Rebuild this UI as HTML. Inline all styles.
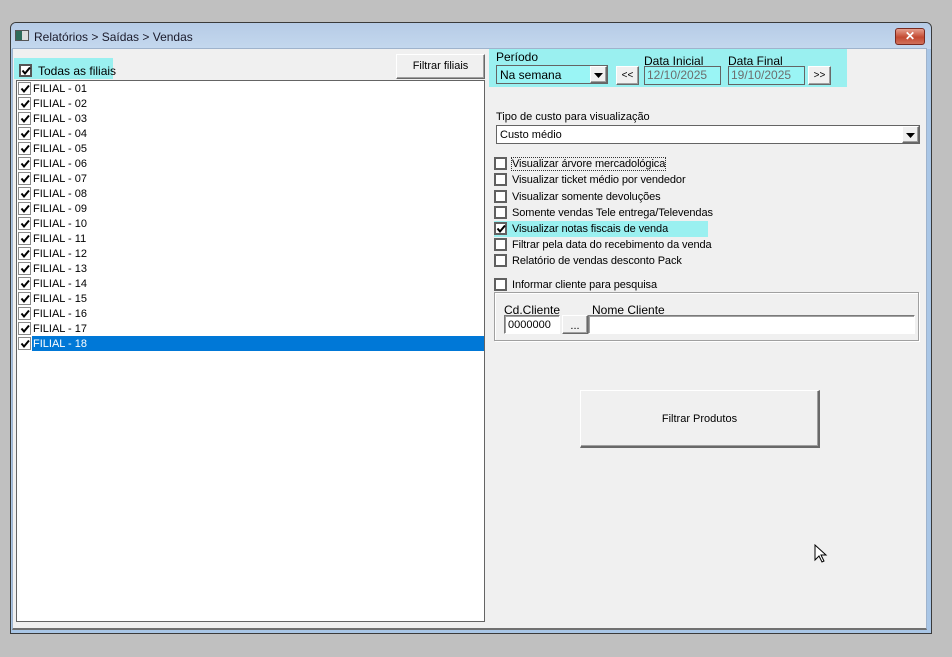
<!DOCTYPE html>
<html><head><meta charset="utf-8"><style>
*{box-sizing:border-box;margin:0;padding:0}
body{width:952px;height:657px;background:#c0c0c0;position:relative;overflow:hidden;font-family:"Liberation Sans",sans-serif;font-size:11px;color:#000}
.a{position:absolute}
.win{left:10px;top:22px;width:922px;height:612px;background:#a9c6e6;border:1px solid #3a3a3a;border-radius:6px 6px 0 0}
.title{left:11px;top:23px;width:920px;height:26px;background:linear-gradient(#b6cbe6,#c4d8ee);border-radius:5px 5px 0 0}
.client{left:12px;top:48px;width:915px;height:582px;background:#f0f0f0;border:1px solid #9fb3cc;border-bottom:2px solid #707070}
.cb{width:13px;height:13px;border:1px solid #555;background:#fff}
.cb.g{border:1px solid #8a8a8a}
.cb svg{position:absolute;left:1px;top:1px}
.btn{background:#f0f0f0;border:1px solid;border-color:#fff #696969 #696969 #fff;box-shadow:inset -1px -1px 0 #a0a0a0;text-align:center}
.inp{background:#fff;border:1px solid;border-color:#7a7a7a #fff #fff #7a7a7a;box-shadow:inset 1px 1px 0 #a0a0a0}
.row{left:18px;height:15px;width:466px}
.row span{position:absolute;left:15px;top:2px}
</style></head><body>
<div class="a win"></div>
<div class="a title"></div>
<div class="a" style="left:15px;top:30px;width:14px;height:11px;border:1px solid #555;background:linear-gradient(90deg,#2f6b5a 50%,#ddd 50%)"></div>
<div class="a" style="left:34px;top:30px;font-size:12px;color:#1a1a2a">Relatórios &gt; Saídas &gt; Vendas</div>
<div class="a" style="left:895px;top:28px;width:30px;height:17px;border:1px solid #7a2a20;border-radius:3px;background:linear-gradient(#e6a08f,#c44a32 55%,#d0705a);color:#fff;font-weight:bold;font-size:12px;text-align:center;line-height:15px">✕</div>
<div class="a client"></div>

<!-- left -->
<div class="a" style="left:14px;top:58px;width:99px;height:21px;background:#9af0f0"></div>
<div class="a cb" style="left:19px;top:64px;border:2px solid #555"><svg width="10" height="10" style="left:0;top:0"><path d="M1.5 4.5l2.5 3 5-6" stroke="#000" stroke-width="2" fill="none"/></svg></div>
<div class="a" style="left:38px;top:64px;font-size:12px">Todas as filiais</div>
<div class="a btn" style="left:396px;top:54px;width:89px;height:25px;line-height:23px">Filtrar filiais</div>
<div class="a" style="left:16px;top:80px;width:469px;height:542px;background:#fff;border:1px solid #646464"></div>
<div class="a" style="left:32px;top:336px;width:452px;height:15px;background:#0078d7"></div>

<div id="rows"></div>

<!-- right -->
<div class="a" style="left:489px;top:49px;width:358px;height:38px;background:#9af0f0"></div>
<div class="a" style="left:496px;top:50px;font-size:12px">Período</div>
<div class="a" style="left:496px;top:65px;width:112px;height:19px;border:1px solid #646464;background:#9af5f5"></div>
<div class="a" style="left:500px;top:68px;font-size:12px">Na semana</div>
<div class="a btn" style="left:590px;top:66px;width:17px;height:17px"><svg width="9" height="5" style="position:absolute;left:3px;top:6px"><path d="M0 0h9l-4.5 5z" fill="#000"/></svg></div>
<div class="a btn" style="left:616px;top:66px;width:23px;height:19px;line-height:17px;font-size:10px">&lt;&lt;</div>
<div class="a" style="left:644px;top:54px;font-size:12px">Data Inicial</div>
<div class="a" style="left:644px;top:66px;width:77px;height:19px;border:1px solid #646464;background:#9af5f5;color:#6d6d6d;font-size:12px;padding:1px 2px">12/10/2025</div>
<div class="a" style="left:728px;top:54px;font-size:12px">Data Final</div>
<div class="a" style="left:728px;top:66px;width:77px;height:19px;border:1px solid #646464;background:#9af5f5;color:#6d6d6d;font-size:12px;padding:1px 2px">19/10/2025</div>
<div class="a btn" style="left:808px;top:66px;width:23px;height:19px;line-height:17px;font-size:10px">&gt;&gt;</div>

<div class="a" style="left:496px;top:111px;font-size:11px">Tipo de custo para visualização</div>
<div class="a" style="left:496px;top:125px;width:424px;height:19px;border:1px solid #646464;background:#fff"></div>
<div class="a" style="left:500px;top:129px">Custo médio</div>
<div class="a btn" style="left:902px;top:126px;width:17px;height:17px"><svg width="9" height="5" style="position:absolute;left:3px;top:6px"><path d="M0 0h9l-4.5 5z" fill="#000"/></svg></div>

<div class="a" style="left:494px;top:221px;width:214px;height:16px;background:#9af0f0"></div>
<div id="opts"></div>

<div class="a" style="left:494px;top:292px;width:425px;height:49px;border:1px solid #a0a0a0;box-shadow:inset 1px 1px 0 #fff,1px 1px 0 #fff"></div>
<div class="a" style="left:504px;top:303px;font-size:12px">Cd.Cliente</div>
<div class="a" style="left:592px;top:303px;font-size:12px">Nome Cliente</div>
<div class="a inp" style="left:504px;top:315px;width:56px;height:19px;padding:3px 3px">0000000</div>
<div class="a btn" style="left:562px;top:315px;width:26px;height:19px;line-height:20px">...</div>
<div class="a inp" style="left:588px;top:315px;width:327px;height:19px"></div>

<div class="a btn" style="left:580px;top:390px;width:240px;height:58px;line-height:56px;font-size:11px;border-right:2px solid #696969;border-bottom:2px solid #696969">Filtrar Produtos</div>

<svg class="a" style="left:814px;top:544px" width="14" height="20"><path d="M1 1v15l4-4 3 6 2-1-3-6h5z" fill="#fff" stroke="#000" stroke-width="1"/></svg>

<script>
var r='';
for(var i=1;i<=18;i++){var y=81+(i-1)*15;var sel=i==18;
r+='<div class="a row" style="top:'+y+'px"><div class="a cb g" style="left:0;top:1px"><svg width="10" height="10"><path d="M1.5 4.5l2.5 3 5-6" stroke="#000" stroke-width="2" fill="none"/></svg></div><span style="'+(sel?'color:#fff':'')+'">FILIAL - '+(i<10?'0':'')+i+'</span></div>';}
document.getElementById('rows').innerHTML=r;
var o=[['Visualizar árvore mercadológica',157,0,1],['Visualizar ticket médio por vendedor',173],['Visualizar somente devoluções',190],['Somente vendas Tele entrega/Televendas',206],['Visualizar notas fiscais de venda',222,1],['Filtrar pela data do recebimento da venda',238],['Relatório de vendas desconto Pack',254],['Informar cliente para pesquisa',278]];
var h='';o.forEach(function(a){h+='<div class="a cb" style="left:494px;top:'+a[1]+'px;border:2px solid #606060">'+(a[2]?'<svg width="10" height="10" style="left:0;top:0"><path d="M1.5 4.5l2.5 3 5-6" stroke="#000" stroke-width="2" fill="none"/></svg>':'')+'</div><div class="a" style="left:512px;top:'+(a[1]+1)+'px;letter-spacing:-0.1px;'+(a[3]?'outline:1px dotted #333':'')+'">'+a[0]+'</div>';});
document.getElementById('opts').innerHTML=h;
</script>
</body></html>
